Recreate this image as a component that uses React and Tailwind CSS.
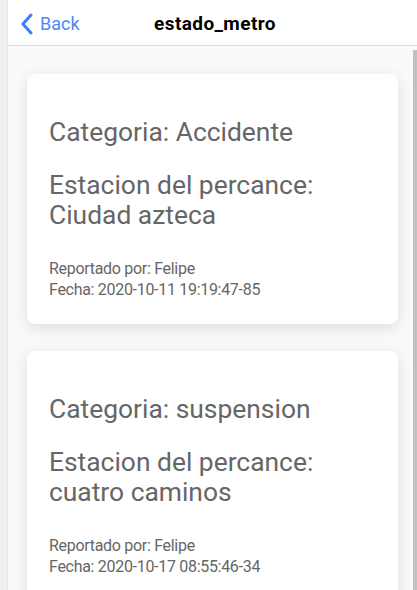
import React from "react";

const reports = [
  { cat: "Accidente", est: "Ciudad azteca", by: "Felipe", date: "2020-10-11 19:19:47-85" },
  { cat: "suspension", est: "cuatro caminos", by: "Felipe", date: "2020-10-17 08:55:46-34" },
];

function Card({ r }) {
  return (
    <div className="mx-[19px] mb-[27px] rounded-[8px] bg-white shadow-[0_4px_16px_rgba(0,0,0,0.12)] px-[22px] pt-[43px] pb-[24px] text-[#666666]">
      <div className="text-[26.4px] leading-[30px]">Categoria: {r.cat}</div>
      <div className="mt-[23px] text-[26.4px] leading-[30px]">
        Estacion del percance:
        <br />
        {r.est}
      </div>
      <div className="mt-[28px] text-[16px] leading-[21px] tracking-[-0.3px]">
        <div>Reportado por: {r.by}</div>
        <div>Fecha: {r.date}</div>
      </div>
    </div>
  );
}

export default function App() {
  return (
    <div
      className="relative flex h-[590px] w-[417px] overflow-hidden bg-[#fafafa]"
      style={{ fontFamily: "Roboto, 'Noto Sans', sans-serif" }}
    >
      <div className="w-[8px] shrink-0 bg-[#f0f0f0] border-r border-[#e6e6e6]" />
      <div className="flex min-w-0 flex-1 flex-col">
        <div className="relative flex h-[46px] shrink-0 items-center border-b border-[#dedede] bg-white pt-[2px]">
          <div className="flex items-center pl-[12px]">
            <svg width="14" height="22" viewBox="0 0 14 22" className="mr-[6px]">
              <path d="M11 2 L3 11 L11 20" fill="none" stroke="#3b82f6" strokeWidth="3" strokeLinecap="round" strokeLinejoin="round" />
            </svg>
            <span className="text-[18px] leading-none text-[#4a8af4]">Back</span>
          </div>
          <div className="pointer-events-none absolute left-0 right-0 pl-[5px] pt-[2px] text-center">
            <span className="text-[19px] font-bold tracking-[0.4px] text-black">estado_metro</span>
          </div>
        </div>
        <div className="pt-[28px]">
          {reports.map((r, i) => (
            <Card key={i} r={r} />
          ))}
        </div>
      </div>
      <div className="absolute right-0 top-[50px] bottom-0 w-[4px] bg-[#c1c1c1]" />
    </div>
  );
}
